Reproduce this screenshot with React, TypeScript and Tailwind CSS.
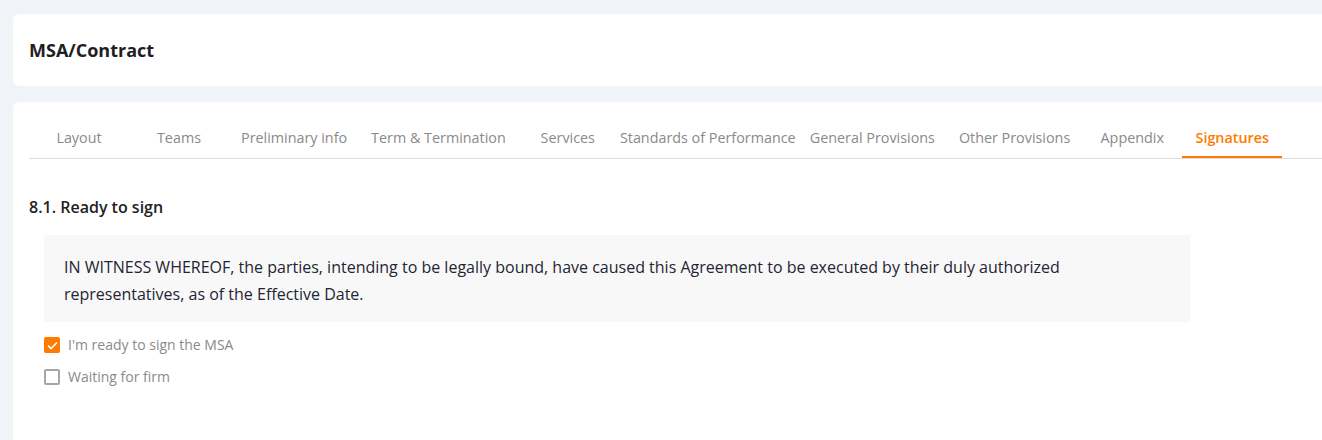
import React from 'react';

const tabs = [
  'Layout',
  'Teams',
  'Preliminary info',
  'Term & Termination',
  'Services',
  'Standards of Performance',
  'General Provisions',
  'Other Provisions',
  'Appendix',
  'Signatures',
];

const App: React.FC = () => {
  return (
    <div
      className="w-[1322px] h-[440px] overflow-hidden bg-[#f0f4f8] pl-[13px] pt-[14px] flex flex-col gap-4"
      style={{ fontFamily: '"Open Sans", "Liberation Sans", sans-serif' }}
    >
      {/* header card */}
      <div className="w-[1340px] h-[72px] shrink-0 bg-white rounded-md flex items-center px-4">
        <h1 className="text-[18px] font-bold text-[#1e1e24]">MSA/Contract</h1>
      </div>

      {/* content card */}
      <div className="w-[1340px] flex-1 bg-white rounded-t-md pt-4 pl-4">
        <div className="flex border-b border-[#dedede]">
          {tabs.map((t) => {
            const active = t === 'Signatures';
            return (
              <div
                key={t}
                className={
                  'min-w-[100px] max-w-[180px] px-3 h-[40px] pt-[2px] flex items-center justify-center whitespace-nowrap text-[14.35px] border-b-2 ' +
                  (active
                    ? 'border-[#ff7a00] text-[#ff7a00] font-semibold'
                    : 'border-transparent text-[#8a8a8a]')
                }
              >
                {t}
              </div>
            );
          })}
        </div>

        <h2 className="mt-[36px] text-base font-semibold text-[#222] leading-6">8.1. Ready to sign</h2>

        <div className="mt-[16px] ml-[15px] w-[1146px] h-[87px] bg-[#f8f8f8] pl-5 pr-28 pt-[19px] text-base leading-[27px] text-[#1f2533]">
          IN WITNESS WHEREOF, the parties, intending to be legally bound, have caused this Agreement to be executed by their duly
          authorized representatives, as of the Effective Date.
        </div>

        <div className="ml-[15px] mt-[13px] flex flex-col gap-3">
          <label className="flex items-center gap-2 text-sm leading-5 text-[#8a8a8a]">
            <span className="w-4 h-4 rounded-[2px] bg-[#ff7a00] flex items-center justify-center">
              <svg width="11" height="9" viewBox="0 0 11 9" fill="none">
                <path d="M1 4.5L4 7.5L10 1.5" stroke="white" strokeWidth="1.6" />
              </svg>
            </span>
            I'm ready to sign the MSA
          </label>
          <label className="flex items-center gap-2 text-sm leading-5 text-[#8a8a8a]">
            <span className="w-4 h-4 rounded-[2px] border-2 border-[#a6a6a6] bg-white" />
            Waiting for firm
          </label>
        </div>
      </div>
    </div>
  );
};

export default App;
